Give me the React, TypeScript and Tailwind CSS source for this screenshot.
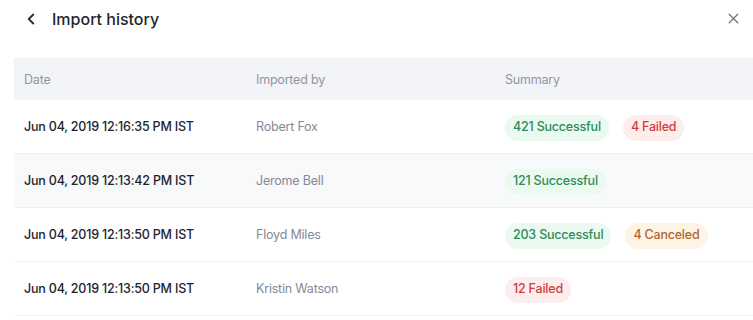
import { ChevronLeft, X } from "lucide-react";

type Badge = { label: string; tone: "success" | "failed" | "canceled" };

interface ImportRow {
  date: string;
  by: string;
  summary: Badge[];
}

const rows: ImportRow[] = [
  {
    date: "Jun 04, 2019 12:16:35 PM IST",
    by: "Robert Fox",
    summary: [
      { label: "421 Successful", tone: "success" },
      { label: "4 Failed", tone: "failed" },
    ],
  },
  {
    date: "Jun 04, 2019 12:13:42 PM IST",
    by: "Jerome Bell",
    summary: [{ label: "121 Successful", tone: "success" }],
  },
  {
    date: "Jun 04, 2019 12:13:50 PM IST",
    by: "Floyd Miles",
    summary: [
      { label: "203 Successful", tone: "success" },
      { label: "4 Canceled", tone: "canceled" },
    ],
  },
  {
    date: "Jun 04, 2019 12:13:50 PM IST",
    by: "Kristin Watson",
    summary: [{ label: "12 Failed", tone: "failed" }],
  },
];

const toneClasses = {
  success: "bg-[#eafaf0] text-[#2f8a5a]",
  failed: "bg-[#fdeeee] text-[#d23c3c]",
  canceled: "bg-[#fdf4e6] text-[#b5642c]",
};

export default function App() {
  return (
    <div className="min-h-[320px] w-[753px] bg-white font-['Inter','Noto_Sans',sans-serif] text-[12.5px] tracking-[-0.2px]">
      {/* Header */}
      <div className="flex h-[36px] items-center justify-between pl-[22px] pr-[11px] pt-[1px]">
        <div className="flex items-center gap-[12px]">
          <ChevronLeft className="h-[18px] w-[18px] text-[#2a2f3a]" strokeWidth={2.5} />
          <h1 className="text-[16px] font-medium tracking-normal text-[#1f2430]">Import history</h1>
        </div>
        <X className="h-[17px] w-[17px] text-[#6b7180]" strokeWidth={1.8} />
      </div>

      {/* Table */}
      <div className="ml-[14px] mt-[22px]">
        <div className="grid h-[42px] grid-cols-[232px_249px_1fr] items-center bg-[#f3f4f7] pl-[10px] pt-[2px] text-[#9196a4]">
          <div>Date</div>
          <div>Imported by</div>
          <div>Summary</div>
        </div>

        {rows.map((row, i) => (
          <div
            key={i}
            className={`grid h-[54px] grid-cols-[232px_249px_1fr] items-center border-b border-[#eef0f2] pl-[10px] pt-[2px] ${
              i === 1 ? "bg-[#f8f9fa]" : "bg-white"
            }`}
          >
            <div className="font-medium text-[#1f2430]">{row.date}</div>
            <div className="text-[#858a97]">{row.by}</div>
            <div className="flex items-center gap-[14px]">
              {row.summary.map((b) => (
                <span
                  key={b.label}
                  className={`inline-flex h-[26px] items-center rounded-[13px] px-[8px] font-medium ${toneClasses[b.tone]}`}
                >
                  {b.label}
                </span>
              ))}
            </div>
          </div>
        ))}
      </div>
    </div>
  );
}
